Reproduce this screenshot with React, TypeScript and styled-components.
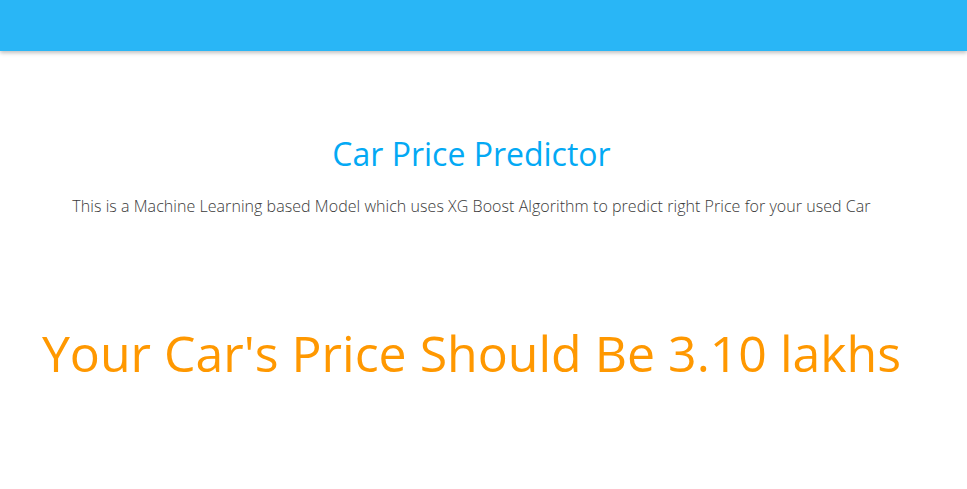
import React from 'react'
import styled, { createGlobalStyle } from 'styled-components'

const GlobalStyle = createGlobalStyle`
  body {
    margin: 0;
    background: #fff;
    font-family: "Open Sans", "Noto Sans", sans-serif;
  }
`

const TopBar = styled.header`
  height: 51px;
  background-color: #29b6f6;
  box-shadow: 0 2px 4px rgba(0, 0, 0, 0.25);
`

const Main = styled.main`
  display: flex;
  flex-direction: column;
  align-items: center;
  padding: 83px 24px 0 0;
`

const Title = styled.h2`
  margin: 0;
  font-size: 32px;
  font-weight: 400;
  color: #03a9f4;
  line-height: 40px;
`

const Lead = styled.p`
  margin: 21px 0 0;
  font-size: 16px;
  font-weight: 300;
  letter-spacing: 0.05px;
  color: #3a3a3a;
  line-height: 22px;
`

const Result = styled.h1<{ color?: string }>`
  margin: 101px 0 0;
  font-size: 50px;
  font-weight: 400;
  line-height: 70px;
  color: ${({ color }) => color || '#ff9800'};
`

const App = () => {
  return (
    <>
      <GlobalStyle />
      <TopBar />
      <Main>
        <Title>Car Price Predictor</Title>
        <Lead>
          This is a Machine Learning based Model which uses XG Boost Algorithm to predict right Price for your used Car
        </Lead>
        <Result>Your Car's Price Should Be 3.10 lakhs</Result>
      </Main>
    </>
  )
}

export default App
